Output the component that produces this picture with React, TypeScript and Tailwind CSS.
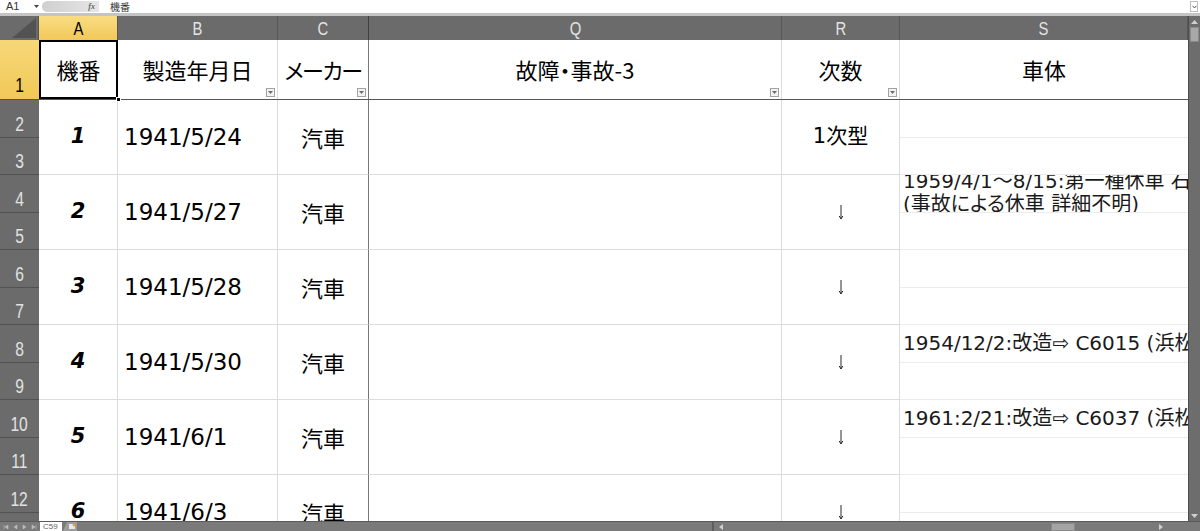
import React from 'react';

const cellFont = { fontFamily: '"DejaVu Sans", "Noto Sans CJK JP", sans-serif', fontFeatureSettings: '"palt"' };
const cjkFont = { fontFamily: '"Noto Sans CJK JP", "DejaVu Sans", sans-serif', fontFeatureSettings: '"palt"' };
const narrowFont = { fontFamily: '"Liberation Sans", sans-serif' };
const uiFont = { fontFamily: '"Liberation Sans", "Noto Sans CJK JP", sans-serif' };

type Rec = {
  no: string;
  date: string;
  maker: string;
  r: string;
  s: (string[] | string)[];
};

const records: Rec[] = [
  { no: '1', date: '1941/5/24', maker: '汽車', r: '1次型', s: ['', ''] },
  {
    no: '2',
    date: '1941/5/27',
    maker: '汽車',
    r: '↓',
    s: [['1959/4/1～8/15:第一種休車 石巻', '(事故による休車 詳細不明)'], ''],
  },
  { no: '3', date: '1941/5/28', maker: '汽車', r: '↓', s: ['', ''] },
  { no: '4', date: '1941/5/30', maker: '汽車', r: '↓', s: ['1954/12/2:改造⇨ C6015 (浜松工場)', ''] },
  { no: '5', date: '1941/6/1', maker: '汽車', r: '↓', s: ['1961:2/21:改造⇨ C6037 (浜松工場)', ''] },
  { no: '6', date: '1941/6/3', maker: '汽車', r: '↓', s: ['', ''] },
];

function FilterButton() {
  return (
    <div className="absolute bottom-[2px] right-[2px] w-[9px] h-[9px] border border-[#a3a3a3] bg-[#f3f3f3] flex items-center justify-center">
      <svg width="5" height="3" viewBox="0 0 5 3">
        <path d="M0 0 L5 0 L2.5 3 Z" fill="#6b6b6b" />
      </svg>
    </div>
  );
}

// condensed header label, like the narrow Excel header font
function Narrow({ children, size }: { children: React.ReactNode; size: string }) {
  return (
    <span className={`inline-block scale-x-[0.78] leading-none ${size}`} style={narrowFont}>
      {children}
    </span>
  );
}

function DownArrow() {
  return (
    <svg width="6" height="16" viewBox="0 0 6 16">
      <path d="M3 1 V15 M1.2 12 L3 15 L4.8 12" stroke="#2a2a2a" strokeWidth="1" fill="none" />
    </svg>
  );
}

function FormulaBar() {
  return (
    <div className="h-[13px] flex items-center bg-white text-[10px] text-[#333]" style={uiFont}>
      <div className="w-[34px] pl-[6px] leading-none text-[11px]">A1</div>
      <svg width="5" height="3" viewBox="0 0 5 3" className="mr-[3px]">
        <path d="M0 0 L5 0 L2.5 3 Z" fill="#444" />
      </svg>
      <div className="w-[57px] h-[11px] rounded-l-full bg-gradient-to-r from-[#cfcfcf] to-[#e6e6e6] flex items-center justify-end pr-[4px]">
        <span className="italic font-bold text-[8px] text-[#666] leading-none" style={{ fontFamily: '"Liberation Serif", serif' }}>
          fx
        </span>
      </div>
      <div className="flex-1 pl-[11px] leading-none" style={cjkFont}>
        機番
      </div>
      <div className="w-[8px] h-[11px] mr-[2px] border border-[#bdbdbd] flex items-center justify-center">
        <svg width="5" height="4" viewBox="0 0 5 4">
          <path d="M0.5 0.8 L2.5 3 L4.5 0.8" stroke="#555" strokeWidth="1" fill="none" />
        </svg>
      </div>
    </div>
  );
}

function ColumnHeaders() {
  const cols = [
    { l: 'B', w: 'w-[160px]' },
    { l: 'C', w: 'w-[91px]', dark: true },
    { l: 'Q', w: 'w-[413px]' },
    { l: 'R', w: 'w-[118px]' },
    { l: 'S', w: 'w-[288px]' },
  ];
  return (
    <div className="h-[24px] flex bg-[#6b6b6b]">
      <div className="w-[39px] h-full border-r border-[#575757] relative flex items-end justify-end">
        <svg width="24" height="20" viewBox="0 0 24 20" className="mr-[2px] mb-[2px]">
          <path d="M24 0 L24 20 L0 20 Z" fill="#525252" />
        </svg>
      </div>
      <div className="w-[79px] h-full border-r border-[#575757] bg-gradient-to-b from-[#f9dc82] to-[#f1c858] flex items-center justify-center text-black">
        <Narrow size="text-[19px]">A</Narrow>
      </div>
      {cols.map((c) => (
        <div
          key={c.l}
          className={`${c.w} h-full border-r ${c.dark ? 'border-[#3f3f3f]' : 'border-[#575757]'} flex items-center justify-center text-[#e4e4e4]`}
        >
          <Narrow size="text-[19px]">{c.l}</Narrow>
        </div>
      ))}
    </div>
  );
}

function RowHeader({ n }: { n: number }) {
  return (
    <div className="h-[37.5px] border-b border-[#525252] flex items-end justify-center pb-[3px] text-[#e2e2e2]">
      <Narrow size="text-[20px]">{n}</Narrow>
    </div>
  );
}

function HeaderRow() {
  return (
    <div className="h-[60px] flex border-b border-[#555] text-[22px] text-black" style={cjkFont}>
      <div className="w-[39px] h-full bg-gradient-to-b from-[#f7d877] to-[#f1c858] flex items-end justify-center pb-[4px]">
        <Narrow size="text-[20px]">1</Narrow>
      </div>
      <div className="w-[79px] h-full relative flex items-center justify-center">
        機番
        <div className="absolute inset-0 border-2 border-black" />
        <div className="absolute -bottom-[3px] -right-[3px] w-[5px] h-[5px] bg-black border border-white" />
      </div>
      <div className="w-[160px] h-full border-r border-[#dcdcdc] relative flex items-center justify-center">
        製造年月日
        <FilterButton />
      </div>
      <div className="w-[91px] h-full border-r border-[#777] relative flex items-center justify-center tracking-[-1.5px]">
        メーカー
        <FilterButton />
      </div>
      <div className="w-[413px] h-full border-r border-[#dcdcdc] relative flex items-center justify-center">
        故障・事故-3
        <FilterButton />
      </div>
      <div className="w-[118px] h-full border-r border-[#dcdcdc] relative flex items-center justify-center">
        次数
        <FilterButton />
      </div>
      <div className="w-[288px] h-full flex items-center justify-center">車体</div>
    </div>
  );
}

function SCell({ v }: { v: string[] | string }) {
  const lines = Array.isArray(v) ? v : v ? [v] : [];
  return (
    <div className="h-[37.5px] border-b border-[#ececec] overflow-hidden flex flex-col justify-center pl-[3px] text-[20px] leading-[23px] text-[#1a1a1a] whitespace-nowrap">
      {lines.map((l, i) => (
        <div key={i} className="shrink-0">
          {l}
        </div>
      ))}
    </div>
  );
}

function RecordRow({ rec, idx }: { rec: Rec; idx: number }) {
  const first = idx * 2 + 2;
  return (
    <div className="h-[75px] flex text-black" style={cellFont}>
      <div className="w-[39px] bg-[#6b6b6b]">
        <RowHeader n={first} />
        <RowHeader n={first + 1} />
      </div>
      <div className="w-[79px] border-r border-b border-[#dcdcdc] flex items-center justify-center">
        <span className="text-[21px] font-bold italic">{rec.no}</span>
      </div>
      <div className="w-[160px] border-r border-b border-[#dcdcdc] flex items-center pl-[6px] text-[23px]">
        {rec.date}
      </div>
      <div className="w-[91px] border-r border-r-[#777] border-b border-b-[#dcdcdc] flex items-center justify-center text-[22px]" style={cjkFont}>
        {rec.maker}
      </div>
      <div className="w-[413px] border-r border-b border-[#dcdcdc]" />
      <div className="w-[118px] border-r border-b border-[#dcdcdc] flex items-center justify-center">
        {rec.r === '↓' ? <DownArrow /> : <span className="text-[21px]">{rec.r}</span>}
      </div>
      <div className="w-[288px]">
        <SCell v={rec.s[0]} />
        <SCell v={rec.s[1]} />
      </div>
    </div>
  );
}

function VScroll() {
  return (
    <div className="w-[12px] h-full bg-[#6d6d6d] border-l border-[#4d4d4d] flex flex-col items-center">
      <svg width="7" height="4" viewBox="0 0 7 4" className="mt-[4px]">
        <path d="M0 4 L7 4 L3.5 0 Z" fill="#d0d0d0" />
      </svg>
      <div className="mt-[3px] w-[9px] h-[15px] bg-[#a8a8a8] border border-[#8a8a8a]" />
      <div className="flex-1" />
      <svg width="7" height="4" viewBox="0 0 7 4" className="mb-[3px]">
        <path d="M0 0 L7 0 L3.5 4 Z" fill="#d0d0d0" />
      </svg>
    </div>
  );
}

function BottomBar() {
  return (
    <div className="h-[10px] flex items-center bg-[#7a7a7a] border-t border-[#5a5a5a]" style={uiFont}>
      <div className="w-[40px] flex items-center justify-around px-[2px]">
        {['M1 1 L1 5 M5 1 L2 3 L5 5 Z', 'M5 1 L2 3 L5 5 Z', 'M2 1 L5 3 L2 5 Z', 'M2 1 L5 3 L2 5 Z M6 1 L6 5'].map((d, i) => (
          <svg key={i} width="7" height="6" viewBox="0 0 7 6">
            <path d={d} fill="#bcbcbc" stroke="#bcbcbc" strokeWidth="0.6" />
          </svg>
        ))}
      </div>
      <div className="w-[22px] h-full bg-white text-[8px] leading-[9px] text-[#666] pl-[3px]">C59</div>
      <svg width="16" height="9" viewBox="0 0 16 9" className="ml-[1px]">
        <path d="M0 9 L4 0 L14 0 L14 9 Z" fill="#9c9c9c" />
        <rect x="6" y="2" width="6" height="5" fill="#e8e8e8" />
        <circle cx="11" cy="3" r="1.4" fill="#e89a3c" />
      </svg>
      <div className="w-[633px]" />
      <div className="w-[2px] h-full bg-[#5e5e5e]" />
      <div className="flex-1 h-full flex items-center">
        <svg width="8" height="6" viewBox="0 0 8 6" className="ml-[3px]">
          <path d="M6 0 L6 6 L2 3 Z" fill="#d0d0d0" />
        </svg>
        <div className="w-[326px]" />
        <div className="w-[24px] h-[8px] bg-[#a4a4a4] border border-[#8a8a8a]" />
        <div className="w-[82px]" />
        <svg width="8" height="6" viewBox="0 0 8 6">
          <path d="M2 0 L2 6 L6 3 Z" fill="#d0d0d0" />
        </svg>
      </div>
    </div>
  );
}

export default function App() {
  return (
    <div className="w-[1200px] h-[531px] overflow-hidden flex flex-col bg-white">
      <FormulaBar />
      <div className="h-[3px] bg-[#c4c4c4]" />
      <div className="flex flex-1 min-h-0">
        <div className="w-[1188px] h-full flex flex-col overflow-hidden">
          <ColumnHeaders />
          <div className="flex-1 min-h-0 overflow-hidden">
            <HeaderRow />
            {records.map((rec, i) => (
              <RecordRow key={rec.no} rec={rec} idx={i} />
            ))}
          </div>
        </div>
        <VScroll />
      </div>
      <BottomBar />
    </div>
  );
}
